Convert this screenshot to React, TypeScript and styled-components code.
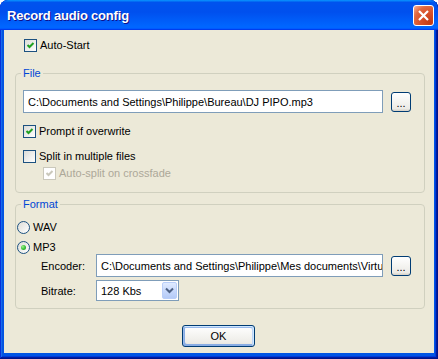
import React from 'react';
import styled, { createGlobalStyle } from 'styled-components';

const GlobalStyle = createGlobalStyle`
    html, body {
        margin: 0;
        padding: 0;
        background: #ffffff;
    }
`;

const Window = styled.div`
    width: 438px;
    height: 359px;
    box-sizing: border-box;
    display: flex;
    flex-direction: column;
    background: #0055e5;
    border-radius: 8px 8px 0 0;
    overflow: hidden;
    box-shadow: inset -1px -1px #00138c, inset 1px 1px #0831d9, inset -2px -2px #001ea0,
        inset 2px 2px #166aee, inset -3px -3px #003bda, inset 3px 3px #0855dd;
    font-family: "Liberation Sans", Arial, sans-serif;
    font-size: 11px;
    color: #000;
`;

const TitleBar = styled.div`
    flex: none;
    height: 30px;
    box-sizing: border-box;
    display: flex;
    align-items: center;
    justify-content: space-between;
    padding: 0 4px 0 7px;
    border-radius: 8px 8px 0 0;
    background: linear-gradient(180deg, #0997ff 0%, #0053ee 8%, #0050ee 40%, #0066ff 88%,
        #0066ff 93%, #005bff 95%, #003dd7 96%, #003dff 100%);
`;

const Title = styled.span`
    color: #fff;
    font-weight: bold;
    font-size: 13px;
    letter-spacing: -0.2px;
    text-shadow: 1px 1px #0f1089;
`;

const CloseButton = styled.div`
    width: 21px;
    height: 21px;
    box-sizing: border-box;
    border: 1px solid #fff;
    border-radius: 3px;
    display: flex;
    align-items: center;
    justify-content: center;
    background: radial-gradient(circle at 85% 85%, #c43b14 0%, #d9512b 45%, #e0683f 70%, #f4a68a 95%);
`;

const Body = styled.div`
    flex: 1;
    margin: 0 4px 6px;
    background: #ece9d8;
    display: flex;
    flex-direction: column;
    padding: 9px 9px 0 11px;
    min-width: 0;
`;

const Row = styled.label<{ $indent?: number; $top?: number }>`
    display: flex;
    align-items: center;
    height: 13px;
    gap: 3px;
    margin-left: ${p => p.$indent || 0}px;
    margin-top: ${p => p.$top || 0}px;
    line-height: 13px;
    color: ${p => p.color || '#000'};
`;

const Box = styled.span<{ $disabled?: boolean }>`
    width: 13px;
    height: 13px;
    box-sizing: border-box;
    flex: none;
    border: 1px solid ${p => (p.$disabled ? '#cac8bb' : '#1c5180')};
    background: ${p => (p.$disabled ? '#fff' : 'linear-gradient(135deg, #dcdcd7 0%, #ffffff 100%)')};
    display: flex;
`;

const Radio = styled.span`
    width: 13px;
    height: 13px;
    box-sizing: border-box;
    flex: none;
    border: 1px solid #1c5180;
    border-radius: 50%;
    background: linear-gradient(135deg, #dcdcd7 0%, #ffffff 100%);
    display: flex;
    align-items: center;
    justify-content: center;
`;

const Dot = styled.span`
    width: 5px;
    height: 5px;
    border-radius: 50%;
    background: radial-gradient(circle at 35% 35%, #a0f08a 0%, #3cc43c 50%, #1a8f1a 100%);
`;

const Group = styled.fieldset<{ $inset: number; $top: number; $bottom: number }>`
    margin: ${p => p.$top}px 0 0;
    padding: 10px 13px ${p => p.$bottom}px ${p => p.$inset}px;
    border: 1px solid #d0d0bf;
    border-radius: 4px;
    display: flex;
    flex-direction: column;
    min-width: 0;
`;

const Legend = styled.legend<{ $shift: number }>`
    color: #0046d5;
    padding: 0 2px;
    margin-left: ${p => p.$shift}px;
    line-height: 13px;
`;

const FieldRow = styled.div<{ $top?: number }>`
    display: flex;
    align-items: center;
    gap: 8px;
    margin-top: ${p => p.$top || 0}px;
`;

const Label = styled.span`
    width: 47px;
    padding-left: 24px;
    flex: none;
`;

const Edit = styled.div`
    flex: 1;
    min-width: 0;
    height: 23px;
    box-sizing: border-box;
    border: 1px solid #7f9db9;
    background: #fff;
    padding: 0 4px;
    display: flex;
    align-items: center;
    white-space: nowrap;
    overflow: hidden;
`;

const XpButton = styled.div<{ $default?: boolean }>`
    box-sizing: border-box;
    border: 1px solid #003c74;
    border-radius: 3px;
    background: linear-gradient(180deg, #ffffff 0%, #ecebe6 86%, #d6d0c5 100%);
    display: flex;
    align-items: center;
    justify-content: center;
    box-shadow: ${p =>
        p.$default
            ? 'inset -1px 1px #cee7ff, inset 1px 2px #98b8ea, inset -2px 2px #bcd4f6, inset 1px -1px #89ade4, inset 2px -2px #89ade4'
            : 'none'};
`;

const BrowseButton = styled(XpButton)`
    width: 20px;
    height: 20px;
    flex: none;
    line-height: 14px;
    padding-top: 2px;
`;

const Combo = styled.div`
    width: 83px;
    height: 21px;
    box-sizing: border-box;
    border: 1px solid #7f9db9;
    background: #fff;
    display: flex;
    align-items: center;
    justify-content: space-between;
    padding: 1px;
`;

const ComboText = styled.span`
    padding-left: 3px;
`;

const ComboArrow = styled.span`
    width: 15px;
    height: 17px;
    box-sizing: border-box;
    border: 1px solid #b9cef9;
    border-radius: 2px;
    background: linear-gradient(180deg, #e0ebff 0%, #c4d6fb 60%, #b5cbf7 100%);
    display: flex;
    align-items: center;
    justify-content: center;
`;

const Footer = styled.div`
    display: flex;
    justify-content: center;
    margin-top: 16px;
    padding-right: 3px;
`;

const OkButton = styled(XpButton)`
    width: 73px;
    height: 22px;
`;

const Check = ({ disabled }: { disabled?: boolean }) => (
    <svg width="11" height="11" viewBox="0 0 11 11">
        <path d="M2.5 5 L4.5 7 L8.5 3" fill="none" stroke={disabled ? '#cac8bb' : '#21a121'} strokeWidth="2" />
    </svg>
);

export default function App() {
    return (
        <>
            <GlobalStyle />
            <Window>
                <TitleBar>
                    <Title>Record audio config</Title>
                    <CloseButton>
                        <svg width="11" height="11" viewBox="0 0 11 11">
                            <path d="M1 1 L10 10 M10 1 L1 10" stroke="#fff" strokeWidth="2.2" />
                        </svg>
                    </CloseButton>
                </TitleBar>
                <Body>
                    <Row $indent={9}>
                        <Box><Check /></Box>
                        Auto-Start
                    </Row>

                    <Group $inset={7} $top={15} $bottom={12}>
                        <Legend $shift={-2}>File</Legend>
                        <FieldRow>
                            <Edit>C:\Documents and Settings\Philippe\Bureau\DJ PIPO.mp3</Edit>
                            <BrowseButton>...</BrowseButton>
                        </FieldRow>
                        <Row $top={12}>
                            <Box><Check /></Box>
                            Prompt if overwrite
                        </Row>
                        <Row $top={12}>
                            <Box />
                            Split in multiple files
                        </Row>
                        <Row $indent={20} $top={4} color="#aca899">
                            <Box $disabled><Check disabled /></Box>
                            Auto-split on crossfade
                        </Row>
                    </Group>

                    <Group $inset={1} $top={5} $bottom={7}>
                        <Legend $shift={4}>Format</Legend>
                        <Row>
                            <Radio />
                            WAV
                        </Row>
                        <Row $top={7}>
                            <Radio><Dot /></Radio>
                            MP3
                        </Row>
                        <FieldRow>
                            <Label>Encoder:</Label>
                            <Edit>C:\Documents and Settings\Philippe\Mes documents\Virtu</Edit>
                            <BrowseButton>...</BrowseButton>
                        </FieldRow>
                        <FieldRow $top={3}>
                            <Label>Bitrate:</Label>
                            <Combo>
                                <ComboText>128 Kbs</ComboText>
                                <ComboArrow>
                                    <svg width="9" height="7" viewBox="0 0 9 7">
                                        <path d="M1 1.5 L4.5 5 L8 1.5" fill="none" stroke="#4d6185" strokeWidth="2" />
                                    </svg>
                                </ComboArrow>
                            </Combo>
                        </FieldRow>
                    </Group>

                    <Footer>
                        <OkButton $default>OK</OkButton>
                    </Footer>
                </Body>
            </Window>
        </>
    );
}
